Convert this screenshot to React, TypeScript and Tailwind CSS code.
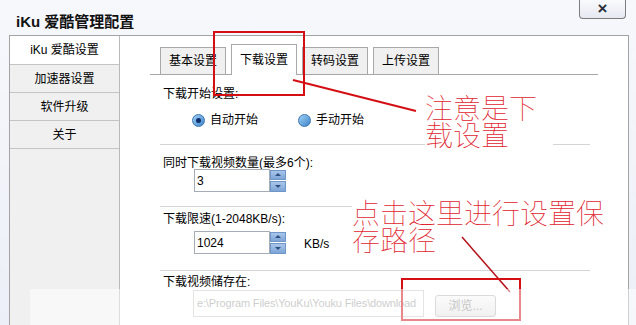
import React from "react";

const FONT = { fontFamily: '"Liberation Sans", "Noto Sans CJK SC", sans-serif' };

function Spinner() {
  return (
    <div className="flex flex-col w-[16px] h-[22px] gap-[1px] bg-white">
      <div className="flex-1 bg-gradient-to-b from-[#a9c6ea] to-[#7ea5d6] border border-[#6f96c8] flex items-center justify-center">
        <div className="w-0 h-0 border-l-[3px] border-r-[3px] border-b-[3px] border-l-transparent border-r-transparent border-b-[#2d4f80]" />
      </div>
      <div className="flex-1 bg-gradient-to-b from-[#a9c6ea] to-[#7ea5d6] border border-[#6f96c8] flex items-center justify-center">
        <div className="w-0 h-0 border-l-[3px] border-r-[3px] border-t-[3px] border-l-transparent border-r-transparent border-t-[#2d4f80]" />
      </div>
    </div>
  );
}

function Radio({ checked }: { checked: boolean }) {
  return (
    <div className="w-[13px] h-[13px] rounded-full bg-gradient-to-br from-[#9fd0f5] to-[#3f86c9] border border-[#3a74b0] flex items-center justify-center">
      {checked && <div className="w-[5px] h-[5px] rounded-full bg-[#0c2f6b]" />}
    </div>
  );
}

export default function App() {
  const tabs = ["基本设置", "下载设置", "转码设置", "上传设置"];
  const side = ["iKu 爱酷设置", "加速器设置", "软件升级", "关于"];
  return (
    <div className="relative w-[636px] h-[325px] overflow-hidden bg-gradient-to-b from-[#f7f8fc] to-[#eceff7] text-[12px] text-black" style={FONT}>
      {/* header */}
      <div className="flex h-[35px] items-start justify-between">
        <div className="pl-[16px] pt-[12px] text-[15px] font-bold leading-[20px] text-[#111]">iKu 爱酷管理配置</div>
        <div className="mr-[10px] -mt-[1px] w-[47px] h-[20px] border border-[#7c7c7c] border-t-0 rounded-b-[4px] bg-gradient-to-b from-[#fafbfd] to-[#e6e9f1] flex items-center justify-center text-[17px] font-bold leading-none text-[#2a2f3a]">×</div>
      </div>
      {/* body */}
      <div className="ml-[9px] w-[620px] h-[300px] flex border-t border-l border-r border-[#a3a3a3]">
        <div className="w-[110px] bg-[#f0f0f0] border-r border-[#b9b9b9] flex flex-col">
          {side.map((s, i) => (
            <div key={s} className={`h-[28px] flex items-center justify-center border-b border-[#c4c4c4] ${i === 0 ? "bg-white h-[29px]" : ""}`}>{s}</div>
          ))}
        </div>
        <div className="flex-1 bg-white">
          <div className="ml-[30px] w-[448px] mt-[11px] h-[28px] border-b border-[#a7a7a7] flex items-end pl-[10px] gap-[5px]">
            {tabs.map((t, i) => (
              <div
                key={t}
                className={`w-[66px] flex items-center justify-center border border-[#a8a8a8] border-b-0 ${i === 1 ? "h-[31px] bg-white -mb-[1px] pb-[1px]" : "h-[27px] bg-[#f0f0f0]"}`}
              >
                {t}
              </div>
            ))}
          </div>
          <div className="pl-[43px] mt-[12px] h-[14px] leading-[14px]">下载开始设置:</div>
          <div className="flex items-center mt-[12px] h-[14px] pl-[72px]">
            <Radio checked />
            <span className="ml-[5px]">自动开始</span>
            <div className="ml-[40px]"><Radio checked={false} /></div>
            <span className="ml-[5px]">手动开始</span>
          </div>
          <div className="ml-[40px] w-[430px] mt-[17px] h-px bg-[#d4d4d4]" />
          <div className="pl-[43px] mt-[11px] h-[14px] leading-[14px]">同时下载视频数量(最多6个):</div>
          <div className="ml-[74px] -mt-[1px] flex items-center">
            <div className="w-[76px] h-[23px] border border-[#a5acb5] flex items-center pl-[2px]">3</div>
            <Spinner />
          </div>
          <div className="ml-[40px] w-[430px] mt-[14px] h-px bg-[#d4d4d4]" />
          <div className="pl-[43px] mt-[5px] h-[14px] leading-[14px]">下载限速(1-2048KB/s):</div>
          <div className="ml-[74px] mt-[5px] flex items-center">
            <div className="w-[76px] h-[23px] border border-[#a5acb5] flex items-center pl-[2px]">1024</div>
            <Spinner />
            <span className="ml-[18px] mt-[3px]">KB/s</span>
          </div>
          <div className="ml-[40px] w-[430px] mt-[16px] h-px bg-[#d4d4d4]" />
          <div className="pl-[43px] mt-[4px] h-[14px] leading-[14px]">下载视频储存在:</div>
          <div className="ml-[73px] mt-[1px] flex items-start">
            <div className="w-[231px] h-[27px] border border-[#c9c9c9] flex items-center pl-[3px] text-[11px] tracking-[-0.15px] text-[#9a9a9a] whitespace-nowrap overflow-hidden">e:\Program Files\YouKu\Youku Files\download</div>
            <div className="ml-[11px] mt-[5px] w-[61px] h-[22px] border border-[#b5b5b5] rounded-[3px] bg-gradient-to-b from-[#f6f6f6] to-[#e3e3e3] flex items-center justify-center text-[#8a8a8a]">浏览...</div>
          </div>
        </div>
      </div>

      {/* annotations */}
      <div className="absolute left-[425px] top-[96px] w-[128px] h-[56px] bg-white text-[28px] leading-[27px] text-[#e0252e] font-thin">
        注意是下<br />载设置
      </div>
      <div className="absolute left-[352px] top-[201px] w-[256px] h-[69px] bg-white text-[28px] leading-[27px] text-[#e0252e] font-thin">
        点击这里进行设置保<br />存路径
      </div>
      <div className="absolute left-[213px] top-[31px] w-[92px] h-[65px] border-2 border-[#d40f14]" />
      <svg className="absolute left-0 top-0" width="636" height="325">
        <line x1="293" y1="80" x2="416" y2="111" stroke="#d40f14" strokeWidth="2" />
        <line x1="462" y1="237" x2="510" y2="292" stroke="#b4121a" strokeWidth="1.5" />
      </svg>
      <div className="absolute left-[401px] top-[278px] w-[120px] h-[43px] border-2 border-[#d40f14]" />
      {/* washed-out bottom overlay */}
      <div className="absolute left-[30px] top-[289px] w-[606px] h-[36px] bg-white/50" />
    </div>
  );
}
